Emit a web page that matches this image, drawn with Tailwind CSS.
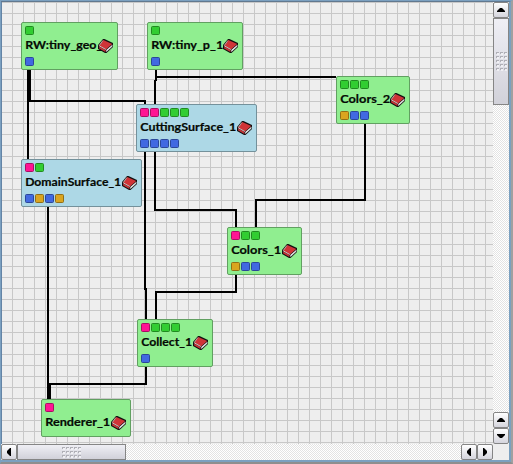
<!DOCTYPE html>
<html lang="en">
<head>
<meta charset="utf-8">
<title>Module map</title>
<script src="https://cdn.jsdelivr.net/npm/@tailwindcss/browser@4"></script>
</head>
<body class="w-[513px] h-[464px] overflow-hidden bg-[#eeeeee]">
<svg class="absolute w-0 h-0">
  <symbol id="book" viewBox="0 0 16 14">
    <path d="M5 0h1.500L15 4v4l-6.500 6H7L0 10V6z" fill="#111"/>
    <path d="M1.200 7.500L7.500 11v2L1.200 9.500z" fill="#c93236"/>
    <path d="M5.300 .9L14.200 5 8 10.500 1 6.500z" fill="#cf3438"/>
    <path d="M1.200 6.800L7.800 10.500" stroke="#d8c4c4" stroke-width="1"/>
    <path d="M4.800 1.600L1.300 6.500" stroke="#b9a5a5" stroke-width="1"/>
    <path d="M8.300 11L14.400 5.800V7.600L8.300 13z" fill="#fff"/>
    <path d="M8.500 12L14.200 6.900" stroke="#999" stroke-width=".4"/>
  </symbol>
  <pattern id="dots" width="4" height="4" patternUnits="userSpaceOnUse">
    <path d="M0 0h3v1H1v1H0z" fill="#b0b0b7" shape-rendering="crispEdges"/>
    <path d="M1 1h2v2H1z" fill="#f0f0f4" shape-rendering="crispEdges"/>
  </pattern>
</svg>
<div class="flex flex-col w-[513px] h-[464px] border-t border-l border-t-[#7ba0c0] border-l-[#7ba0c0] border-b-2 border-b-[#8e8e8e] border-r-2 border-r-[#a0a0a0]">
  <div class="flex flex-col flex-1 min-h-0 border-t border-t-[#61788f] border-r-2 border-r-[#7ba0c0] border-b-2 border-b-[#7ba0c0]">
    <div class="flex h-[442px]">
      <main id="canvas" class="relative w-[492px] h-[442px] overflow-hidden border-l border-l-[#6384a6] bg-[#eeeeee] bg-[linear-gradient(to_right,#c8c8c8_1px,transparent_1px),linear-gradient(to_bottom,#c8c8c8_1px,transparent_1px)] bg-[size:11px_11px] bg-[position:10px_0px,0px_0px]">
        <svg class="absolute left-[-2px] top-[-2px] w-[494px] h-[444px]" viewBox="0 0 494 444" fill="none" stroke="#000" stroke-width="2" shape-rendering="crispEdges">
          <path d="M28 70V159M30 70V101H145V104M145 152V290M146 288V319M156 70V81M155 80V104M156 77H336M155 152V210H236V227M365 124V200H256V227M236 275V292H156V319M146 367V384H50V399M48 207V399"/>
        </svg>
      </main>
      <div class="flex flex-col w-4 bg-white bg-[repeating-conic-gradient(#e3e3e3_0_25%,#fff_0_50%)] bg-[size:2px_2px]">
        <div class="flex items-center justify-center h-4 border border-[#858585] rounded-xs bg-linear-to-b from-white to-[#d5d5dd]"><svg class="w-2 h-1" viewBox="0 0 8 4"><path d="M3 0h2l3 3v1H0V3z"/></svg></div>
        <div class="flex items-center justify-center h-[87px] border border-[#858585] bg-linear-to-b from-[#efeff5] to-[#d1d1d9]"><svg class="w-[11px] h-[19px]"><rect width="11" height="19" fill="url(#dots)"/></svg></div>
        <div class="flex-1"></div>
        <div class="flex items-center justify-center h-4 border border-[#858585] rounded-xs bg-linear-to-b from-white to-[#d5d5dd]"><svg class="w-2 h-1" viewBox="0 0 8 4"><path d="M3 0h2l3 3v1H0V3z"/></svg></div>
        <div class="flex items-center justify-center h-4 border border-[#858585] rounded-xs bg-linear-to-b from-white to-[#d5d5dd]"><svg class="w-2 h-1" viewBox="0 0 8 4"><path d="M3 4h2l3-3V0H0v1z"/></svg></div>
      </div>
    </div>
    <div class="flex h-4">
      <div class="flex w-[492px] bg-white bg-[repeating-conic-gradient(#e3e3e3_0_25%,#fff_0_50%)] bg-[size:2px_2px]">
        <div class="flex items-center justify-center w-4 border border-[#858585] rounded-xs bg-linear-to-b from-white to-[#d5d5dd]"><svg class="w-1 h-2" viewBox="0 0 4 8"><path d="M0 3v2l3 3h1V0H3z"/></svg></div>
        <div class="flex items-center justify-center w-[109px] border border-[#858585] bg-linear-to-b from-[#efeff5] to-[#d1d1d9]"><svg class="w-[19px] h-[11px]"><rect width="19" height="11" fill="url(#dots)"/></svg></div>
        <div class="flex-1"></div>
        <div class="flex items-center justify-center w-4 border border-[#858585] rounded-xs bg-linear-to-b from-white to-[#d5d5dd]"><svg class="w-1 h-2" viewBox="0 0 4 8"><path d="M0 3v2l3 3h1V0H3z"/></svg></div>
        <div class="flex items-center justify-center w-4 border border-[#858585] rounded-xs bg-linear-to-b from-white to-[#d5d5dd]"><svg class="w-1 h-2" viewBox="0 0 4 8"><path d="M4 3v2L1 8H0V0h1z"/></svg></div>
      </div>
      <div class="flex-1 bg-[#eeeeee]"></div>
    </div>
  </div>
</div>
<script>
const port = {
  g: 'bg-[#32cd32] border-[#218a21]',
  b: 'bg-[#4169e1] border-[#2b4799]',
  p: 'bg-[#ff1493] border-[#a80f62]',
  o: 'bg-[#daa520] border-[#926f16]'
};
const green = 'bg-[#90ee90] border-[#61a061]', blue = 'bg-[#add8e6] border-[#74919b]';
// x, y, width, height, colours, label, label width, input ports, output ports
const nodes = [
  [21, 22, 97, 48, green, 'RW:tiny_geo_', 77, 'g', 'b'],
  [147, 22, 96, 48, green, 'RW:tiny_p_1', 72, 'g', 'b'],
  [136, 104, 121, 48, blue, 'CuttingSurface_1', 96, 'ppggg', 'bbbb'],
  [21, 159, 121, 48, blue, 'DomainSurface_1', 96, 'pg', 'bobo'],
  [336, 76, 74, 48, green, 'Colors_2', 50, 'ggg', 'obb'],
  [227, 227, 75, 48, green, 'Colors_1', 50, 'pgg', 'obb'],
  [137, 319, 76, 48, green, 'Collect_1', 51, 'pggg', 'b'],
  [41, 399, 90, 38, green, 'Renderer_1', 65, 'p', '']
];
const ports = s => '<div class="flex gap-px h-[9px]">' + [...s].map(c => `<i class="block w-[9px] h-[9px] border rounded-[1.5px] ${port[c]}"></i>`).join('') + '</div>';
document.getElementById('canvas').insertAdjacentHTML('beforeend', nodes.map(([x, y, w, h, c, t, tw, a, b]) =>
  `<div class="absolute flex flex-col border rounded-xs p-[3px] ${c}" style="left:${x - 2}px;top:${y - 2}px;width:${w}px;height:${h}px">
    ${ports(a)}
    <svg class="block h-[22px] w-full shrink-0 overflow-visible font-['Lato',sans-serif] text-[11.5px] font-bold"><text x="0.2" y="14" textLength="${tw}" lengthAdjust="spacingAndGlyphs" fill="#050a05" stroke="#050a05" stroke-width=".2">${t}</text></svg>
    <svg class="absolute right-[3px] top-[16px] w-4 h-3.5"><use href="#book"/></svg>
    ${ports(b)}
  </div>`).join(''));
</script>
</body>
</html>
